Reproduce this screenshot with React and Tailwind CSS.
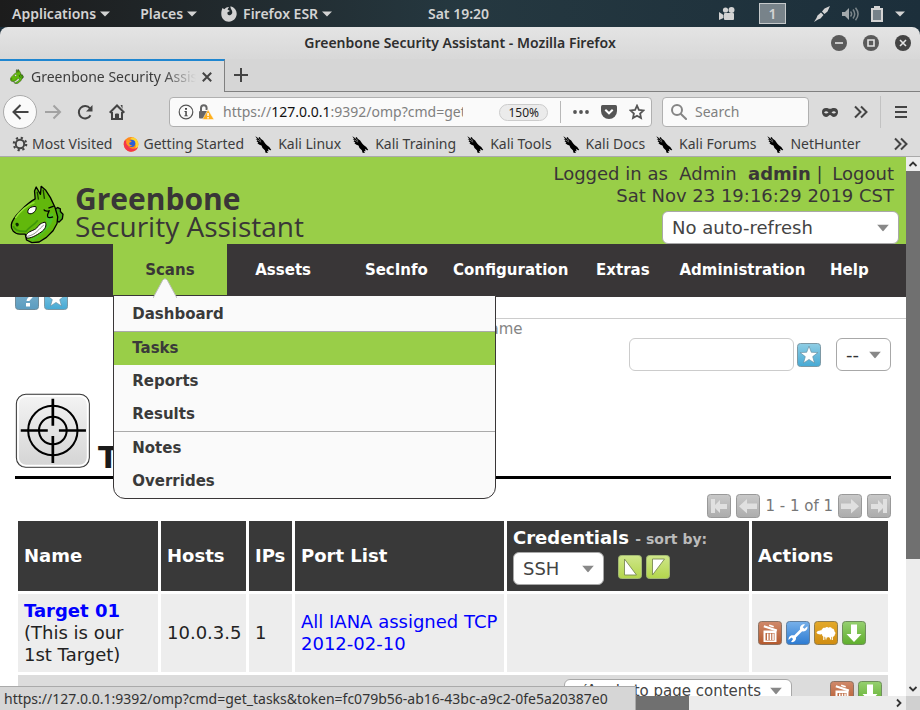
import { useState } from 'react';

const UI = 'font-["Noto_Sans","Open_Sans",sans-serif]';

const bookmarks = ['Kali Linux', 'Kali Training', 'Kali Tools', 'Kali Docs', 'Kali Forums', 'NetHunter'];
const navItems = ['Assets', 'SecInfo', 'Configuration', 'Extras', 'Administration', 'Help'];
const scanItems = [
  { label: 'Dashboard', cls: 'h-[35px] pt-0.5' },
  { label: 'Tasks', cls: 'h-[34px] border-t border-[#aaa] bg-[#99ce48]' },
  { label: 'Reports', cls: 'h-[33px]' },
  { label: 'Results', cls: 'h-[33px]' },
  { label: 'Notes', cls: 'h-[34px] border-t border-[#aaa]' },
  { label: 'Overrides', cls: 'h-[33px]' },
];

/* --- small drawings --- */

function Caret({ className = 'text-[#d3d3d3]' }) {
  return (
    <svg width="10" height="6" viewBox="0 0 10 6" className={className} aria-hidden="true">
      <path d="M0 0.5h10L5 5.5z" fill="currentColor" />
    </svg>
  );
}

function Chevrons() {
  return (
    <svg width="14" height="14" viewBox="0 0 14 14" fill="none" stroke="#444" strokeWidth="2" aria-hidden="true">
      <path d="M1 1.5 6.5 7 1 12.5M7 1.5 12.5 7 7 12.5" />
    </svg>
  );
}

function KaliIcon() {
  return (
    <svg width="17" height="17" viewBox="0 0 50 50" aria-hidden="true">
      <path d="M1 1l9 5 4-3 3 5 7 5 6 9 5 5 7 5 6 9-3 1-7-4 2 7-5-1 3 6-7-1-2-7-7-7-3-7-6-2-6-5 3-1-6-5 4 0-6-6 5 1z" fill="#000" />
      <path d="M4 2l14 12M8 12l10 6" stroke="#dcdcdc" strokeWidth="1.500" />
    </svg>
  );
}

function FirefoxIcon() {
  return (
    <svg width="16" height="16" viewBox="0 0 48 48" aria-hidden="true">
      <circle cx="24" cy="25" r="22" fill="#ff8a1c" />
      <path d="M22 8C28 0 42 6 45 18c4 14-3 26-17 29 10-8 13-17 8-25-3-6-8-9-14-14z" fill="#ffd42f" />
      <path d="M4 14c-5 14 2 32 20 33 12 0 19-7 21-14-8 7-20 7-27 0-5-5-5-11-1-15-3-4-9-5-13-4z" fill="#f4364c" />
      <circle cx="26" cy="22" r="11" fill="#2c5fd8" />
      <path d="M10 13c8-3 14 0 16 4l-7 3c-1 5 3 8 9 7-4 5-13 5-17-2-2-4-2-8-1-12z" fill="#ff9a1f" />
    </svg>
  );
}

function HorseIcon({ width, height }) {
  return (
    <svg width={width} height={height} viewBox="32 15 166 176" aria-hidden="true">
      {/* knob behind the neck */}
      <path d="M166 88l10-6 8 4 0 8 8 8-2 14-10 10-10-6z" fill="#4aa818" stroke="#000" strokeWidth="4" strokeLinejoin="round" />
      {/* head */}
      <path d="M108 56C88 66 74 82 62 94 50 106 38 118 36 134c-2 14 8 28 26 28l16 0 4 18 16 8 22-2 22-14 20-20 12-22 2-20-8-28-14-30-14-22-14-12-2 24-13-22-5 12z" fill="#62b80c" stroke="#000" strokeWidth="4" strokeLinejoin="round" />
      <path d="M48 114C60 96 82 76 106 66" fill="none" stroke="#93e234" strokeWidth="5" />
      <path d="M42 138c6 14 20 17 38 16 10-14 24-18 36-34" fill="none" stroke="#3f960a" strokeWidth="5" />
      <path d="M160 98c8 18-4 44-40 72l-18 12-12-4c30-8 50-26 54-52-6-6-4-16 4-20z" fill="#4fc428" />
      <path d="M114 34l4 24M132 28l4 28" stroke="#1c3d05" strokeWidth="4" />
      <path d="M134 88c2 6 10 5 16 4-2 8-8 12-4 18 3 4 10 2 16 0M148 84l16-6" fill="none" stroke="#000" strokeWidth="4" />
      {/* eye, nostril and teeth */}
      <path d="M86 98c-2-12 8-20 24-19 4 10-6 22-18 22z" fill="#fff" stroke="#000" strokeWidth="3" />
      <path d="M80 168c4-14 18-14 30-22 8-6 8-16 28-20 6 10 0 22-12 30-14 10-32 20-44 18z" fill="#fff" stroke="#000" strokeWidth="3" />
      <path d="M84 169c26-4 36-24 50-34" fill="none" stroke="#555" strokeWidth="2" />
      <path d="M48 132c2-5 8-5 10-1s-1 9-6 8z" fill="#0d2b02" />
    </svg>
  );
}

function TileIcon({ from, to, stroke, children }) {
  const id = 'g' + from.slice(1) + to.slice(1);
  return (
    <svg width="24" height="24" viewBox="0 0 24 24" className="shrink-0" aria-hidden="true">
      <defs>
        <linearGradient id={id} x1="0" y1="0" x2="0" y2="1">
          <stop offset="0" stopColor={from} />
          <stop offset="1" stopColor={to} />
        </linearGradient>
      </defs>
      <rect x=".5" y=".5" width="23" height="23" rx="3" fill={`url(#${id})`} stroke={stroke} />
      {children}
    </svg>
  );
}

const StarTile = () => (
  <TileIcon from="#8fcde4" to="#46a9d4" stroke="#7d98a4">
    <path d="M12 3.200l2.300 6.100 6.600.3-5.200 4 1.800 6.400L12 16.400 6.500 20l1.800-6.400-5.200-4 6.600-.3z" fill="#fff" stroke="#5f8799" strokeWidth=".6" />
  </TileIcon>
);

const HelpTile = () => (
  <TileIcon from="#7fb2cc" to="#5b9cc0" stroke="#6f8c9b">
    <path d="M7.500 9c0-6 9.500-6 9.500-.5 0 3.500-4 3.500-4 6.500" fill="none" stroke="#fff" strokeWidth="3" />
    <rect x="11" y="17" width="4" height="3.500" fill="#fff" />
  </TileIcon>
);

const TrashTile = () => (
  <TileIcon from="#d0896a" to="#b4592d" stroke="#8c7263">
    <path d="M6.200 4.200l13 4.300-.7 2-13-4.300zM11.500 3.400l4.500 1.500-.6 1.700-4.500-1.500z" fill="#fff" />
    <path d="M5.500 9.500h13v11.500h-13z" fill="#fff" />
    <path d="M7.500 12h9v7.500h-9z" fill="#bd6a42" />
    <path d="M9 12.500h1.500v6.500H9zM11.700 12.500h1.500v6.500h-1.500zM14.300 12.500h1.500v6.500h-1.500z" fill="#fff" />
  </TileIcon>
);

const WrenchTile = () => (
  <TileIcon from="#78b1ea" to="#2c7bd2" stroke="#607f9f">
    <path d="M7.500 17l9.500-9.500" stroke="#fff" strokeWidth="2.600" />
    <path d="M19 3.500c-3-.8-6 2-4.700 5.500.8 1.700 4.700 2.300 6.700-.7.600-1 .6-2 .4-3l-2.900 2.500-1.800-1.500zM5 21c3 .8 6-2 4.700-5-1-2-4.700-2.500-6.500 0-.7 1-.7 2-.6 3l2.800-2.400 1.700 1.500z" fill="#fff" />
  </TileIcon>
);

const SheepTile = () => (
  <TileIcon from="#e3a92a" to="#d08c10" stroke="#8f7d50">
    <path d="M2.500 11.800c.5-1.500 2.300-2.400 4-2.300l1-1 .8 4.500-2 .5c-1.600 0-3.200-.5-3.800-1.700z" fill="#fff" />
    <path d="M8 8.500c.5-1.500 2-2 3-1.500 1-1.300 2.700-1.300 3.500-.3 1.200-.9 3-.4 3.500.8 1.700 0 2.700 1.500 2.300 2.700 1.400.8 1.500 2.600.4 3.500 0 1.600-1.700 2.500-3 2-.9 1.200-2.600 1.200-3.500.3-1 1-2.800.8-3.500-.3-1.500.3-2.700-.8-2.600-2.200-1.400-1-1.400-3.500-.1-5z" fill="#fff" />
    <path d="M9.800 15v4M12 15v3.500M16.500 15v3.500M18.300 15v4" stroke="#fff" strokeWidth="1.100" />
  </TileIcon>
);

const DownTile = () => (
  <TileIcon from="#96d070" to="#5fae2c" stroke="#6f8f5c">
    <path d="M9 3.500h6v9.500h4.500L12 21l-7.500-8H9z" fill="#fff" />
  </TileIcon>
);

const SortTile = ({ d }) => (
  <TileIcon from="#cfe68a" to="#b3d64c" stroke="#a3b874">
    <path d={d} fill="#fff" stroke="#7b8a55" strokeWidth=".9" />
  </TileIcon>
);

const PagerTile = ({ d }) => (
  <TileIcon from="#c9c9c9" to="#acacac" stroke="#999">
    <path d={d} fill="#e0e0e0" />
  </TileIcon>
);

function Select({ label, options, className, textClass }) {
  return (
    <div className={`relative ${className}`}>
      <select
        aria-label={label}
        className={`h-full w-full appearance-none rounded-md border border-[#a8a8a8] bg-white px-[9px] outline-none ${textClass}`}
      >
        {options.map(o => <option key={o}>{o}</option>)}
      </select>
      <svg width="12" height="7" viewBox="0 0 12 7" className="pointer-events-none absolute top-1/2 right-2.5 -translate-y-1/2" aria-hidden="true">
        <path d="M0 0h12L6 7z" fill="#888" />
      </svg>
    </div>
  );
}

/* --- desktop panel --- */

function DesktopBar() {
  return (
    <div className="grid h-[27px] shrink-0 grid-cols-[1fr_auto_1fr] items-center bg-linear-to-r from-[#1c1c1c] via-[#253840] to-[#1c2f3b] pr-[15px] pl-3 text-sm font-semibold text-[#d3d3d3]">
      <div className="flex items-center">
        <button className="flex items-center gap-1">Applications <Caret /></button>
        <button className="ml-[30px] flex items-center gap-1">Places <Caret /></button>
        <button className="ml-6 flex items-center gap-1">
          <svg width="16" height="16" viewBox="0 0 16 16" aria-hidden="true">
            <path d="M1.500 2l1.800 1.200C5 1.500 6.500.8 8 1L6.500 3.500 9 5 6.500 6.300C6 8.500 7.500 9.800 9.500 9c2-.8 2.500-3.500.5-6C9.500 2 9.300 1.200 9.500.3c3.800 1 6.300 4 6.200 7.800-.2 4.300-3.600 7.600-7.800 7.600S.4 12.400.3 8.200C.2 6 .7 4 1.500 2z" fill="#d3d3d3" />
          </svg>
          <span className="ml-0.5">Firefox ESR</span> <Caret />
        </button>
      </div>
      <span>Sat 19:20</span>
      <div className="flex items-center justify-end gap-3">
        <svg width="16" height="14" viewBox="0 0 16 14" fill="#d3d3d3" className="mr-3" aria-hidden="true">
          <circle cx="6.500" cy="3" r="2.600" /><circle cx="12.500" cy="3" r="3" />
          <rect x="5" y="6" width="10" height="7" rx="1" /><path d="M0 5l4.500 3v3L0 13z" />
        </svg>
        <span className="mr-4 flex h-[21px] w-[27px] items-center justify-center border border-[#c5c9cb] bg-[#78838a]">1</span>
        <svg width="16" height="16" viewBox="0 0 16 16" aria-hidden="true">
          <path d="M16 0L13.500 5.500 10.500 8 8 5.500 10.500 2.500zM7 6.500L9.500 9 6.500 12.500 4 13.500 0 16l2.500-4L3.500 9.500z" fill="#d3d3d3" />
        </svg>
        <svg width="17" height="14" viewBox="0 0 17 14" fill="none" stroke="#7d868b" strokeWidth="1.500" aria-hidden="true">
          <path d="M0 5h3l4-4v12L3 9H0z" fill="#a3a9ac" stroke="none" />
          <path d="M8.500 4.500c1.300 1.500 1.300 3.500 0 5M11 2.500c2.300 3 2.300 6 0 9M13.500.8c3.300 4 3.300 8.400 0 12.400" />
        </svg>
        <svg width="12" height="16" viewBox="0 0 12 16" aria-hidden="true">
          <path d="M3 0h6v2h3v14H0V2h3z" fill="#d3d3d3" /><rect x="2" y="4" width="8" height="10" fill="#76828a" />
        </svg>
        <Caret />
      </div>
    </div>
  );
}

/* --- Firefox chrome --- */

function TitleBar() {
  return (
    <div className="relative flex h-8 shrink-0 items-center justify-center rounded-t-lg bg-linear-to-b from-[#e4e4e4] to-[#d8d8d8] text-sm font-semibold text-[#2e2e2e]">
      <span>Greenbone Security Assistant - Mozilla Firefox</span>
      <div className="absolute right-[9px] flex gap-4">
        {['M4 8h8', 'M5 5h6v6H5z', 'M5 5l6 6M11 5l-6 6'].map((d, i) => (
          <button key={d} aria-label={['Minimize', 'Maximize', 'Close'][i]}>
            <svg width="16" height="16" viewBox="0 0 16 16" className="block">
              <circle cx="8" cy="8" r="8" fill={i === 2 ? '#444' : '#5a5a5a'} />
              <path d={d} fill="none" stroke="#e4e4e4" strokeWidth="1.600" />
            </svg>
          </button>
        ))}
      </div>
    </div>
  );
}

function TabStrip() {
  return (
    <div className="flex h-[33px] shrink-0 bg-[#d6d6d6] text-sm text-[#3c3c3c]">
      <div className="flex w-[225px] items-center border-t-2 border-r border-t-[#1f86d0] border-r-[#808080] bg-[#dcdcdc] pl-2.5">
        <HorseIcon width={14} height={15} />
        <span className="ml-[7px] w-[165px] overflow-hidden whitespace-nowrap mask-r-from-80%">Greenbone Security Assistant</span>
        <button aria-label="Close tab" className="ml-1.5">
          <svg width="10" height="10" viewBox="0 0 10 10" stroke="#444" strokeWidth="2"><path d="M.8.8l8.400 8.400M9.200.8L.8 9.200" /></svg>
        </button>
      </div>
      <div className="flex flex-1 items-center border-b border-[#808080] pl-2">
        <button aria-label="New tab">
          <svg width="16" height="16" viewBox="0 0 16 16" stroke="#444" strokeWidth="2"><path d="M8 1v14M1 8h14" /></svg>
        </button>
      </div>
    </div>
  );
}

function Toolbar() {
  return (
    <div className="flex h-10 shrink-0 items-center bg-[#dcdcdc] px-[3px] text-sm text-[#808080]">
      <button aria-label="Back" className="flex size-[34px] items-center justify-center rounded-full border border-[#aaa] bg-[#fafafa]">
        <svg width="17" height="16" viewBox="0 0 17 16" fill="none" stroke="#444" strokeWidth="2"><path d="M16.500 8H2M8.500 1L1.500 8l7 7" /></svg>
      </button>
      <button aria-label="Forward" className="ml-2">
        <svg width="17" height="16" viewBox="0 0 17 16" fill="none" stroke="#a2a2a2" strokeWidth="2"><path d="M0 8h14.500M8.500 1.500L15 8l-6.500 6.500" /></svg>
      </button>
      <button aria-label="Reload" className="ml-[15px]">
        <svg width="16" height="16" viewBox="0 0 16 16" fill="none" stroke="#444" strokeWidth="2"><path d="M13.500 11.200A6.200 6.200 0 1 1 13 4.500" /><path d="M15.500 1v6.500H9z" fill="#444" stroke="none" /></svg>
      </button>
      <button aria-label="Home" className="ml-4">
        <svg width="16" height="16" viewBox="0 0 16 16" fill="none" stroke="#444" strokeWidth="2"><path d="M0.700 8.700L8 1.500l7.300 7.200M3 8v7h10V8" /><path d="M6.500 15v-5h3v5" fill="#444" strokeWidth="1" /><path d="M11.500 1h2v4z" fill="#444" stroke="none" /></svg>
      </button>
      <div className="ml-11 flex h-[30px] min-w-0 flex-1 items-center rounded border border-[#b0b0b0] bg-[#fafafa] px-2">
        <svg width="16" height="16" viewBox="0 0 16 16" className="shrink-0"><circle cx="8" cy="8" r="6.800" fill="none" stroke="#555" strokeWidth="1.200" /><path d="M7 4h2v1.700H7zM6.500 7h2.300v4.500h1V12.300H6.300v-.8h1V8h-.8z" fill="#444" /></svg>
        <svg width="16" height="16" viewBox="0 0 16 16" className="ml-1 shrink-0">
          <path d="M3 7V4a2.800 2.800 0 0 1 5.600 0V6" fill="none" stroke="#666" strokeWidth="2" /><rect x="1" y="7" width="9" height="7.500" rx="1" fill="#666" />
          <path d="M10 5.500l6 10H4.500z" fill="#ffb01c" stroke="#fafafa" strokeWidth=".5" /><path d="M9.300 9h1.500v3H9.300zM9.300 13h1.500v1.400H9.300z" fill="#fff" />
        </svg>
        <span className="ml-[9px] min-w-0 flex-1 overflow-hidden leading-6 whitespace-nowrap">
          https://<span className="text-[#111]">127.0.0.1</span>:9392/omp?cmd=get
        </span>
        <button className="ml-9 h-[17px] rounded-full border border-[#ccc] bg-[#ebebeb] px-2 text-xs leading-[15px] text-[#222]">150%</button>
        <div className="mx-3 h-[22px] w-px bg-[#b8b8b8]" />
        <svg width="16" height="4" viewBox="0 0 16 4" fill="#555"><circle cx="2" cy="2" r="1.900" /><circle cx="8" cy="2" r="1.900" /><circle cx="14" cy="2" r="1.900" /></svg>
        <svg width="16" height="14" viewBox="0 0 16 14" className="ml-3"><path d="M1.500 0h13Q16 0 16 1.500V6a8 8 0 0 1-16 0V1.500Q0 0 1.500 0z" fill="#555" /><path d="M4.300 4.700L8 8.300l3.700-3.600" fill="none" stroke="#fff" strokeWidth="2" /></svg>
        <svg width="16" height="16" viewBox="0 0 16 16" className="ml-3 -mr-0.5" fill="none" stroke="#555" strokeWidth="1.800"><path d="M8 1.700l1.900 4.200 4.600.5-3.400 3.100.9 4.600-4-2.300-4 2.300.9-4.600-3.400-3.100 4.600-.5z" /></svg>
      </div>
      <label className="ml-2.5 flex h-[30px] w-[147px] items-center gap-2 rounded border border-[#b0b0b0] bg-[#fafafa] px-2">
        <svg width="16" height="16" viewBox="0 0 16 16" className="shrink-0" fill="none" stroke="#858585" strokeWidth="2"><circle cx="6" cy="6" r="5" /><path d="M9.700 9.700l6 6" /></svg>
        <input aria-label="Search" placeholder="Search" className="w-full min-w-0 bg-transparent outline-none placeholder:text-[#808080]" />
      </label>
      <svg width="16" height="9" viewBox="0 0 16 9" className="ml-[13px]"><path d="M4 0c2 0 3 .8 4 .8S10 0 12 0c2.500 0 4 1.500 4 3.800C16 7 14 9 12 9S9 7 8 7 6 9 4 9 0 7 0 3.800C0 1.500 1.500 0 4 0z" fill="#444" /><path d="M2 4.500q2-2.500 4.500 0-2.500 2-4.500 0zM9.500 4.500q2.500-2.500 4.500 0-2 2-4.500 0z" fill="#dcdcdc" /></svg>
      <button aria-label="More tools" className="mr-3 ml-4"><Chevrons /></button>
      <div className="h-8 w-px bg-[#c2c2c2]" />
      <button aria-label="Open menu" className="mr-2.5 ml-3.5">
        <svg width="12" height="12" viewBox="0 0 12 12" fill="#444"><path d="M0 0h12v2H0zM0 5h12v2H0zM0 10h12v2H0z" /></svg>
      </button>
    </div>
  );
}

function BookmarksBar() {
  return (
    <div className="flex h-[25px] shrink-0 items-center gap-[11px] border-b border-[#aaa] bg-[#dcdcdc] px-3 text-sm whitespace-nowrap text-[#3c3c3c]">
      <a href="#most" className="flex items-center gap-1">
        <svg width="16" height="16" viewBox="0 0 16 16" fill="none" stroke="#444"><circle cx="8" cy="8" r="4.200" strokeWidth="2" /><circle cx="8" cy="8" r="6.200" strokeWidth="2.200" strokeDasharray="2.200 2.669" /></svg>
        Most Visited
      </a>
      <a href="#started" className="flex items-center gap-1"><FirefoxIcon />Getting Started</a>
      {bookmarks.map(b => (
        <a key={b} href="#kali" className="flex items-center gap-1.5"><KaliIcon />{b}</a>
      ))}
      <button aria-label="More bookmarks" className="ml-auto"><Chevrons /></button>
    </div>
  );
}

/* --- Greenbone page --- */

function PageHeader() {
  return (
    <header className="flex h-[87px] shrink-0 justify-between bg-[#99ce48] pr-[7px] pl-2.5 text-[#393637]">
      <div className="flex items-end gap-2.5">
        <HorseIcon width={55} height={59} />
        <div className='pb-1 font-["Open_Sans",sans-serif]'>
          <div className="text-[30px] leading-[29px] font-bold">Greenbone</div>
          <div className="text-[28px] leading-[27px]">Security Assistant</div>
        </div>
      </div>
      <div className="flex flex-col items-end pt-1.5 text-lg leading-[22px]">
        <div className="pr-[5px] whitespace-pre">
          Logged in as  Admin  <a href="#me" className="font-bold">admin</a> | <a href="#logout" className="ml-1">Logout</a>
        </div>
        <div className="pr-[5px]">Sat Nov 23 19:16:29 2019 CST</div>
        <Select label="Auto-refresh" options={['No auto-refresh']} className="mt-1 h-[33px] w-[237px]" textClass="text-lg text-[#444]" />
      </div>
    </header>
  );
}

function ScansMenu() {
  return (
    <ul className="absolute top-[51px] left-0 z-10 w-[383px] overflow-hidden rounded-b-xl border border-[#393637] bg-[#fafafa] text-left">
      {scanItems.map(item => (
        <li key={item.label} className={item.cls}>
          <a href="#scans" className="block pl-[18px] leading-8 text-[#3a3a3a]">{item.label}</a>
        </li>
      ))}
    </ul>
  );
}

function Nav() {
  return (
    <nav className="grid h-[53px] shrink-0 grid-cols-8 bg-[#393637] text-[15px] leading-[53px] font-bold text-white">
      <div />
      <div className="relative text-center">
        <a href="#scans" className="block h-[51px] bg-[#99ce48] text-[#393637]">Scans</a>
        <ScansMenu />
        <svg width="24" height="20" viewBox="0 0 24 20" className="absolute top-[34px] left-10 z-20" aria-hidden="true">
          <path d="M0 20L9.500 2.500q2.500-3.500 5 0L24 20z" fill="#fafafa" />
          <path d="M0 20L9.500 2.500q2.500-3.500 5 0L24 20" fill="none" stroke="#bbb" />
        </svg>
      </div>
      {navItems.map(n => <a key={n} href="#nav" className="text-center">{n}</a>)}
    </nav>
  );
}

function TargetsTable() {
  const th = 'bg-[#393939] px-1.5 text-left';
  const td = 'bg-[#ededed] px-1.5';
  return (
    <table className="w-full table-fixed border-separate border-spacing-[3px] text-lg leading-[22px] text-[#222]">
      <colgroup>
        <col className="w-[140px]" />
        <col className="w-[85px]" />
        <col className="w-[43px]" />
        <col className="w-[209px]" />
        <col />
        <col className="w-[136px]" />
      </colgroup>
      <thead>
        <tr className="h-[70px] text-white">
          <th className={th}>Name</th>
          <th className={th}>Hosts</th>
          <th className={th}>IPs</th>
          <th className={th}>Port List</th>
          <th className={th}>
            Credentials <span className="text-sm text-[#bbb]">- sort by:</span>
            <div className="mt-[3px] flex items-center">
              <Select label="Credential type" options={['SSH']} className="h-[33px] w-[91px]" textClass="text-lg font-normal text-[#444]" />
              <button aria-label="Sort ascending" className="mr-1 mb-1 ml-3.5 h-6"><SortTile d="M6.500 4v16h12z" /></button>
              <button aria-label="Sort descending" className="mb-1 h-6"><SortTile d="M6.500 4h12l-12 16z" /></button>
            </div>
          </th>
          <th className={th}>Actions</th>
        </tr>
      </thead>
      <tbody>
        <tr className="h-[78px]">
          <td className={td}>
            <a href="#target" className="font-bold text-[#0000ff]">Target 01</a><br />(This is our 1st Target)
          </td>
          <td className={td}>10.0.3.5</td>
          <td className={td}>1</td>
          <td className={td}><a href="#ports" className="text-[#0000ff]">All IANA assigned TCP 2012-02-10</a></td>
          <td className={td} />
          <td className={td}>
            <div className="flex gap-1">
              <button aria-label="Move to trashcan"><TrashTile /></button>
              <button aria-label="Edit"><WrenchTile /></button>
              <button aria-label="Clone"><SheepTile /></button>
              <button aria-label="Export"><DownTile /></button>
            </div>
          </td>
        </tr>
        <tr>
          <td colSpan={6} className="bg-[#dcdcdc] px-1.5 py-1">
            <div className="flex items-start justify-end">
              <Select label="Apply to" options={['√Apply to page contents']} className="h-6 w-[228px]" textClass="pl-3 text-[15px] text-[#444]" />
              <div className="ml-[38px] flex gap-1 pt-0.5">
                <button aria-label="Trash page contents"><TrashTile /></button>
                <button aria-label="Export page contents"><DownTile /></button>
              </div>
            </div>
          </td>
        </tr>
      </tbody>
    </table>
  );
}

function PageContent() {
  const [filter, setFilter] = useState('');
  return (
    <main className="min-h-0 flex-1 overflow-hidden bg-white">
      <div className="flex h-[13px] items-end gap-[5px] overflow-hidden pl-[15px]">
        <HelpTile />
        <StarTile />
      </div>
      <div className="mt-2 ml-[113px] border-t border-[#ccc] text-[15px] text-[#858585]">
        <p className="h-[19px] pl-[367px] leading-[21px]">name</p>
      </div>
      <div className="px-[15px]">
        <div className="flex items-center justify-end">
          <input
            aria-label="Filter name"
            value={filter}
            onChange={e => setFilter(e.target.value)}
            className="h-[33px] w-[165px] rounded-md border border-[#ccc] px-2 text-lg outline-none"
          />
          <button aria-label="Save filter" className="mr-[15px] ml-[3px]"><StarTile /></button>
          <Select label="Filter" options={['--']} className="h-[33px] w-[55px]" textClass="text-lg text-[#333]" />
        </div>
        <div className="mt-[22px] flex h-[86px] items-start gap-2 border-b-3 border-black">
          <svg width="75" height="75" viewBox="0 0 222 222" className="shrink-0" aria-hidden="true">
            <defs>
              <linearGradient id="aim" x1="0" y1="0" x2="0" y2="1"><stop offset="0" stopColor="#f4f4f4" /><stop offset="1" stopColor="#d4d4d4" /></linearGradient>
            </defs>
            <rect x="4" y="4" width="216" height="216" rx="28" fill="url(#aim)" stroke="#333" strokeWidth="3" />
            <rect x="9" y="9" width="206" height="206" rx="24" fill="none" stroke="#fff" strokeWidth="5" />
            <g fill="none" stroke="#000">
              <circle cx="112" cy="111" r="73" strokeWidth="6" />
              <circle cx="112" cy="111" r="41" strokeWidth="6" />
              <path d="M17 111h80M130 111h80M112 17v80M112 127v80" strokeWidth="8" />
            </g>
          </svg>
          <h1 className="mt-[47px] text-3xl leading-9 font-bold text-[#1a1a1a]">Targets</h1>
        </div>
        <div className="mt-[15px] flex items-center justify-end gap-[5px] text-[15px] leading-6 text-[#777]">
          <button aria-label="First page"><PagerTile d="M4 5h4v6l5-5v4h7v5h-7v4l-5-5v5H4z" /></button>
          <button aria-label="Previous page"><PagerTile d="M3 12.300L11 5v4.500h10v5.500H11v4.500z" /></button>
          <span>1 - 1 of 1</span>
          <button aria-label="Next page"><PagerTile d="M21 12.300L13 5v4.500H3v5.500h10v4.500z" /></button>
          <button aria-label="Last page"><PagerTile d="M20 5h-4v6l-5-5v4H4v5h7v4l5-5v5h4z" /></button>
        </div>
        <TargetsTable />
      </div>
    </main>
  );
}

function Arrow({ d }) {
  return (
    <svg width="14" height="14" viewBox="0 0 14 14" fill="none" stroke="#333" strokeWidth="1.800" className="block shrink-0" aria-hidden="true">
      <path d={d} />
    </svg>
  );
}

export default function App() {
  return (
    <div className={`flex h-screen flex-col overflow-hidden bg-[#1c2f3b] ${UI}`}>
      <DesktopBar />
      <TitleBar />
      <TabStrip />
      <Toolbar />
      <BookmarksBar />
      <div className="relative flex min-h-0 flex-1">
        <div className='flex min-w-0 flex-1 flex-col font-["DejaVu_Sans",sans-serif]'>
          <PageHeader />
          <Nav />
          <PageContent />
          <div className="flex h-3.5 shrink-0 justify-between bg-[#ececec]">
            <div className="w-[76%] bg-[#707070]" />
            <Arrow d="M5 3.500L8.500 7 5 10.500" />
          </div>
        </div>
        <div className="flex w-3.5 shrink-0 flex-col bg-[#ececec]">
          <Arrow d="M3.500 9L7 5.500 10.500 9" />
          <div className="h-[388px] bg-[#707070]" />
          <div className="flex-1" />
          <Arrow d="M3.500 5L7 8.500 10.500 5" />
          <div className="h-3.5 bg-[#d0d0d0]" />
        </div>
        <div className="absolute bottom-0 left-0 z-30 flex h-6 min-w-[636px] items-center border-t border-r border-[#aaa] bg-[#d6d6d6] pr-0.5 pl-1 text-sm whitespace-nowrap text-[#333]">
          https://127.0.0.1:9392/omp?cmd=get_tasks&amp;token=fc079b56-ab16-43bc-a9c2-0fe5a20387e0
        </div>
      </div>
    </div>
  );
}
